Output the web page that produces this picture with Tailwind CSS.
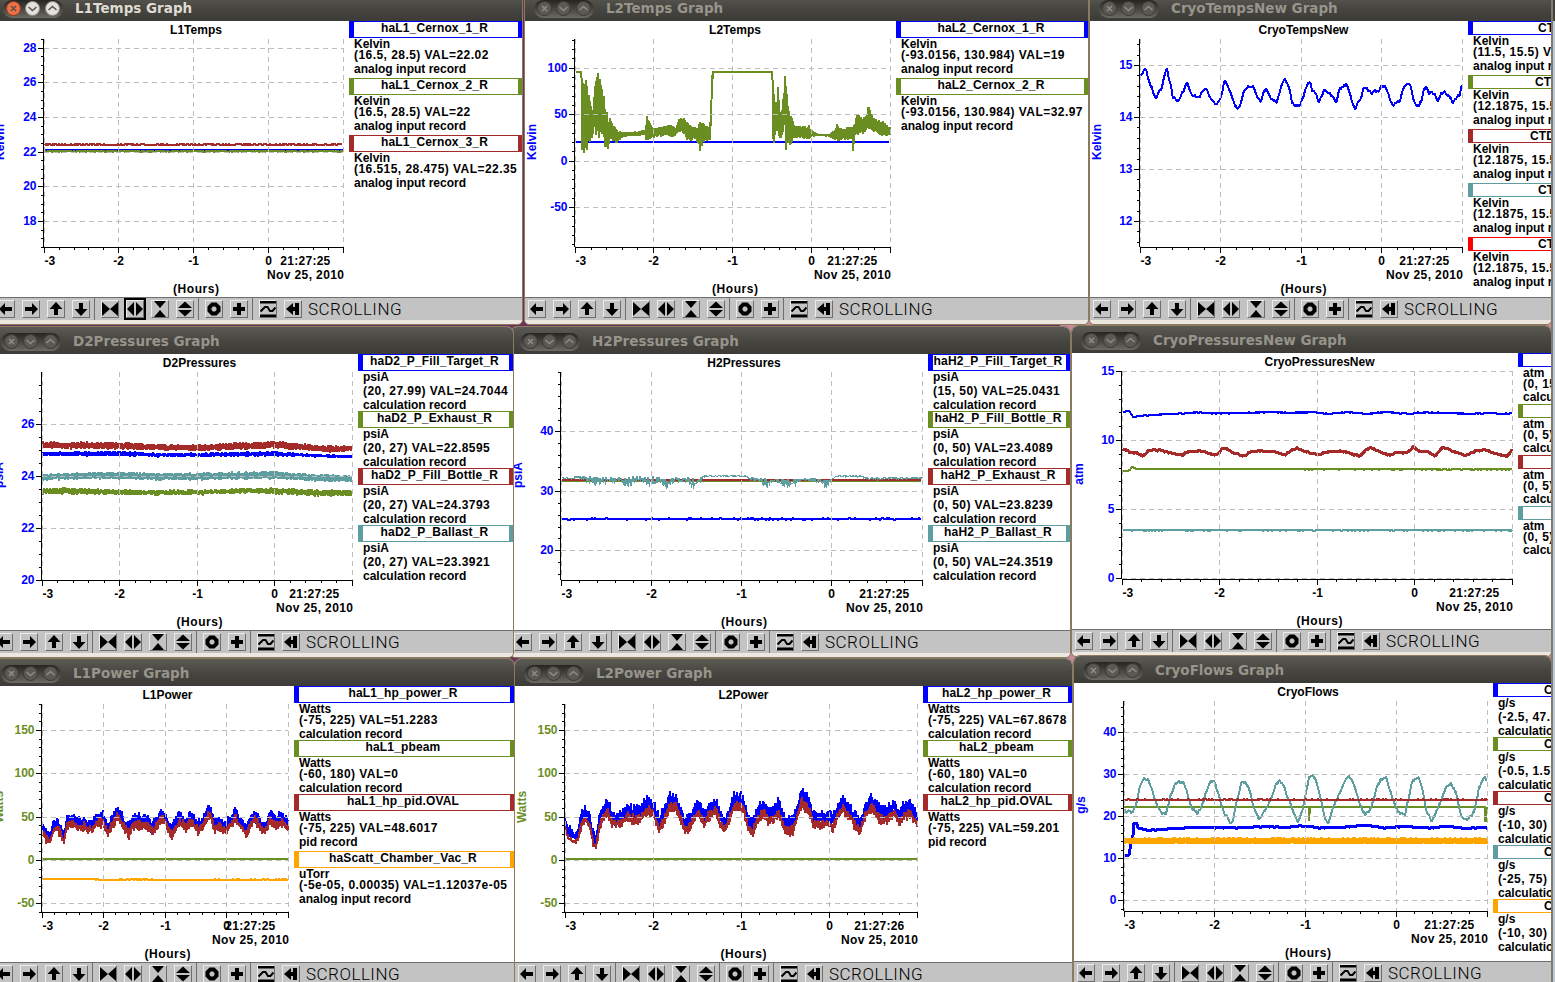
<!DOCTYPE html>
<html lang="en">
  <head>
    <meta charset="UTF-8" />
    <meta name="viewport" content="width=device-width, initial-scale=1.0" />
    <title>Strip charts</title>
    <script src="https://cdn.jsdelivr.net/npm/@tailwindcss/browser@4"></script>
  </head>
  <body class="h-screen w-screen overflow-hidden bg-[#6d3259] font-['Liberation_Sans',sans-serif]">
    <div id="desktop" class="relative h-[982px] w-[1555px] overflow-hidden">
      <div class="absolute left-[1060px] top-0 h-full w-[495px] bg-[#c98a9c]"></div>
    </div>

    <script>
      const BLUE = "#0000ff", GREEN = "#6b8e23", RED = "#a52a2a", TEAL = "#5f9ea0", ORANGE = "#ffa500";
      const BORDER = {
        "#0000ff": "border-[#0000ff]",
        "#6b8e23": "border-[#6b8e23]",
        "#a52a2a": "border-[#a52a2a]",
        "#5f9ea0": "border-[#5f9ea0]",
        "#ffa500": "border-[#ffa500]",
        "#ff0000": "border-[#ff0000]",
      };

      // legend rhythms: item height, name box height, then the three text lines
      const TALL = ["h-[57px]", "h-[17px]", "leading-[12px]", "leading-[11px]", "leading-[16px]"];
      const PSI = ["h-[57px]", "h-[17px]", "leading-[12px]", "leading-[16px]", "leading-[12px]"];
      const WATT = ["h-[54px]", "h-[17px]", "leading-[12px]", "leading-[11px]", "leading-[16px]"];
      const SHORT = ["h-[54px]", "h-[14px]", "leading-[12px]", "leading-[11px]", "leading-[16px]"];
      const ATM = ["h-[51px]", "h-[14px]", "leading-[12px]", "leading-[11px]", "leading-[15px]"];
      const FLOW = ["h-[54px]", "h-[14px]", "leading-[12px]", "leading-[16px]", "leading-[12px]"];

      let seed = 11;
      const rnd = () => (seed = (seed * 16807) % 2147483647) / 2147483647;

      // points are [x, top, bottom]; the trace swings between both edges on every column
      function trace(s) {
        const pts = s.p;
        const n = s.n || 0;
        let d = "";
        let i = 0;
        for (let x = Math.ceil(pts[0][0]); x <= pts[pts.length - 1][0]; x++) {
          while (i < pts.length - 2 && pts[i + 1][0] <= x) i++;
          const a = pts[i], b = pts[i + 1];
          const t = Math.min(1, Math.max(0, (x - a[0]) / (b[0] - a[0])));
          const top = a[1] + (b[1] - a[1]) * t;
          const a2 = a[2] ?? a[1], b2 = b[2] ?? b[1];
          const bot = a2 + (b2 - a2) * t;
          const j = (bot - top) * (s.j ?? 0.15);
          const y1 = top + rnd() * j + (rnd() - 0.5) * n;
          const y2 = bot - rnd() * j + (rnd() - 0.5) * n;
          d += (d ? "L" : "M") + x + " " + Math.round(y1) + "L" + x + " " + Math.round(bot - top < 0.1 ? y1 : y2);
        }
        return `<path d="${d}" fill="none" stroke="${s.c}" stroke-width="${s.w || 2}" stroke-linejoin="bevel" />`;
      }

      const flat = (x0, x1, y, y2) => [[x0, y, y2 ?? y], [x1, y, y2 ?? y]];
      const shift = (pts, a, b) => pts.map((p) => [p[0], p[1] + a, p[2] + b]);

      const l1 = [[42,822,828],[47,828,838],[50,832,837],[54,820,826],[58,818,825],[61,824,834],[64,830,838],[67,816,824],[72,812,820],[77,816,824],[82,818,826],[84,814,824],[88,819,827],[93,818,826],[98,812,820],[103,811,820],[108,822,831],[112,815,823],[117,804,815],[120,810,818],[125,818,826],[129,822,832],[133,814,822],[138,812,824],[143,814,822],[147,813,823],[152,820,830],[157,815,824],[160,808,817],[165,810,818],[168,820,827],[172,823,832],[177,815,823],[180,810,820],[185,817,825],[192,811,820],[198,820,828],[203,815,824],[208,805,812],[211,806,813],[214,818,826],[219,815,824],[226,821,828],[232,813,820],[235,807,816],[240,815,822],[247,823,832],[250,815,822],[255,808,816],[260,817,824],[265,821,828],[270,810,818],[276,815,823],[282,812,820],[288,817,826]];
      const l2 = [[565,812,822],[567,823,833],[570,824,834],[574,830,839],[578,825,836],[582,807,820],[586,806,815],[590,813,822],[593,828,840],[596,833,843],[599,815,830],[603,803,815],[608,796,810],[612,808,820],[617,809,824],[622,808,820],[628,802,817],[634,804,818],[640,803,817],[645,797,812],[650,794,810],[655,802,816],[659,815,828],[664,805,820],[670,790,806],[676,791,805],[680,803,818],[685,814,827],[690,812,828],[694,804,815],[699,796,811],[704,810,822],[709,800,815],[716,796,810],[720,808,822],[725,816,828],[729,805,818],[734,791,806],[740,789,805],[744,797,812],[748,812,826],[752,817,832],[757,806,820],[763,797,812],[768,804,820],[773,804,818],[779,797,812],[783,810,822],[787,815,830],[793,814,829],[797,803,815],[802,786,803],[806,790,806],[810,797,812],[813,809,822],[820,811,823],[828,809,822],[833,812,825],[838,802,815],[843,793,808],[850,802,815],[856,811,826],[860,817,831],[865,802,815],[870,792,808],[875,796,810],[881,805,820],[887,803,818],[893,797,812],[899,807,820],[905,800,814],[910,798,814],[917,809,820]];

      const windows = [
        {
          title: "L1Temps", active: true, x: -6, y: -6, w: 528, h: 276, lx: 349, color: BLUE, unit: "Kelvin", uy: 142, ux: 1, time: "21:27:25",
          xt: [44, 118, 193, 268, 343], range: [16.5, 28.5, 247, 39], major: [18, 20, 22, 24, 26, 28], minor: 0.5, focus: 5,
          fit: TALL, legend: [
            [BLUE, "haL1_Cernox_1_R", "Kelvin", "(16.5, 28.5) VAL=22.02", "analog input record"],
            [GREEN, "haL1_Cernox_2_R", "Kelvin", "(16.5, 28.5) VAL=22", "analog input record"],
            [RED, "haL1_Cernox_3_R", "Kelvin", "(16.515, 28.475) VAL=22.35", "analog input record"],
          ],
          series: [
            { c: BLUE, p: flat(44, 343, 150) },
            { c: GREEN, w: 2, p: flat(44, 343, 151.4), n: 0.5 },
            { c: RED, p: flat(45, 342, 144.6), n: 1 },
          ],
        },
        {
          title: "L2Temps", x: 525, y: -6, w: 563, h: 276, lx: 896, color: BLUE, unit: "Kelvin", uy: 142, time: "21:27:25",
          xt: [575, 653, 732, 811, 890], range: [-93.0156, 130.984, 247, 39], major: [-50, 0, 50, 100], minor: 10,
          fit: TALL, legend: [
            [BLUE, "haL2_Cernox_1_R", "Kelvin", "(-93.0156, 130.984) VAL=19", "analog input record"],
            [GREEN, "haL2_Cernox_2_R", "Kelvin", "(-93.0156, 130.984) VAL=32.97", "analog input record"],
          ],
          series: [
            { c: BLUE, p: flat(575, 889, 142) },
            { c: GREEN, j: 0.2, p: [[576,72,72],[581,72,72],[582,72,154],[585,78,155],[587,77,155],[590,100,145],[593,108,137],[595,76,130],[596,72,140],[598,72,141],[600,74,138],[603,90,138],[604,95,147],[606,108,150],[608,115,150],[611,120,141],[615,126,144],[617,130,143],[622,132,138],[631,132,136],[642,130,136],[645,130,136],[647,115,144],[650,122,141],[653,128,138],[660,126,137],[667,124,136],[673,124,138],[676,127,135],[679,118,132],[684,116,134],[687,121,142],[693,126,140],[696,128,141],[700,122,152],[703,122,143],[707,124,141],[710,128,141],[711,100,128],[712,72,90],[713,72,72],[772,72,72],[773,72,155],[774,90,155],[776,110,130],[778,87,135],[780,112,142],[782,110,140],[785,73,125],[786,73,155],[788,105,148],[790,108,147],[792,115,145],[794,124,138],[798,126,138],[805,126,140],[809,125,141],[813,131,137],[820,134,136],[830,134,137],[834,130,141],[837,123,142],[842,129,140],[849,126,141],[852,128,140],[853,125,152],[855,122,136],[857,111,136],[862,117,135],[867,114,132],[868,103,128],[871,113,130],[876,119,134],[882,120,136],[890,127,137]] },
          ],
        },
        {
          title: "CryoTempsNew", x: 1090, y: -6, w: 461, h: 276, lx: 1468, color: BLUE, unit: "Kelvin", uy: 142, time: "21:27:25",
          xt: [1140, 1220, 1301, 1381, 1462], range: [11.5, 15.5, 247, 39], major: [12, 13, 14, 15], minor: 0.2,
          fit: SHORT, legend: [
            [BLUE, "CT", "Kelvin", "(11.5, 15.5) VAL=14.6", "analog input record", 65],
            [GREEN, "CT", "Kelvin", "(12.1875, 15.5) VAL=14", "analog input record", 62],
            [RED, "CTD", "Kelvin", "(12.1875, 15.5) VAL=14", "analog input record", 57],
            [TEAL, "CT", "Kelvin", "(12.1875, 15.5) VAL=14", "analog input record", 65],
            ["#ff0000", "CT", "Kelvin", "(12.1875, 15.5) VAL=14", "analog input record", 65],
          ],
          series: [
            { c: BLUE, n: 3, p: [[1140,77],[1142,74],[1144,69],[1146,70],[1149,81],[1152,88],[1154,95],[1156,98],[1159,92],[1161,90],[1163,82],[1165,73],[1167,69],[1169,80],[1171,86],[1173,97],[1175,98],[1178,102],[1180,98],[1182,92],[1184,90],[1187,83],[1189,89],[1191,94],[1194,96],[1200,96],[1203,91],[1206,88],[1209,96],[1212,101],[1216,105],[1220,100],[1222,92],[1224,83],[1226,82],[1229,89],[1232,98],[1235,106],[1238,109],[1241,103],[1244,90],[1247,87],[1251,86],[1253,85],[1255,90],[1258,99],[1261,101],[1264,92],[1266,88],[1268,94],[1271,99],[1277,102],[1280,91],[1283,83],[1285,79],[1288,84],[1290,91],[1292,102],[1295,105],[1300,105],[1303,98],[1305,90],[1308,83],[1310,82],[1312,91],[1315,92],[1317,97],[1319,103],[1322,95],[1325,89],[1328,92],[1331,95],[1334,98],[1336,103],[1339,91],[1342,86],[1347,85],[1349,90],[1352,101],[1355,109],[1358,102],[1361,99],[1363,90],[1367,88],[1371,93],[1375,90],[1379,92],[1381,86],[1385,87],[1388,92],[1390,101],[1393,106],[1396,103],[1400,101],[1403,90],[1406,85],[1409,83],[1411,88],[1413,98],[1416,105],[1419,106],[1422,98],[1424,90],[1426,87],[1429,94],[1432,92],[1435,95],[1438,103],[1441,93],[1444,92],[1447,94],[1450,98],[1453,102],[1456,98],[1460,94],[1462,84]] },
          ],
        },
        {
          title: "D2Pressures", x: -8, y: 327, w: 521, h: 276, lx: 358, color: BLUE, unit: "psiA", uy: 475, ux: 0, top: true, time: "21:27:25",
          xt: [42, 119, 197, 274, 352], range: [20, 27.99, 579.500, 372], major: [20, 22, 24, 26], minor: 0.5,
          fit: PSI, legend: [
            [BLUE, "haD2_P_Fill_Target_R", "psiA", "(20, 27.99) VAL=24.7044", "calculation record"],
            [GREEN, "haD2_P_Exhaust_R", "psiA", "(20, 27) VAL=22.8595", "calculation record"],
            [RED, "haD2_P_Fill_Bottle_R", "psiA", "(20, 27) VAL=24.3793", "calculation record"],
            [TEAL, "haD2_P_Ballast_R", "psiA", "(20, 27) VAL=23.3921", "calculation record"],
          ],
          series: [
            { c: BLUE, n: 1.4, p: [[43,452,456],[120,451,456],[160,453,457],[200,453,457],[275,451,456],[310,454,457],[351,455,458]] },
            { c: GREEN, n: 2, p: [[43,488,494],[70,488,494],[140,490,495],[200,490,495],[250,488,493],[275,488,494],[320,490,496],[351,490,496]] },
            { c: RED, n: 2, p: [[43,442,448],[80,442,449],[110,442,449],[150,444,450],[190,445,451],[230,443,450],[275,441,448],[300,444,450],[330,446,452],[351,445,451]] },
            { c: TEAL, n: 2, p: [[43,474,480],[100,472,479],[150,473,480],[190,473,480],[275,471,479],[310,474,481],[351,475,482]] },
          ],
        },
        {
          title: "H2Pressures", x: 511, y: 327, w: 559, h: 276, lx: 928, color: BLUE, unit: "psiA", uy: 475, ux: 519, time: "21:27:25",
          xt: [561, 651, 741, 831, 922], range: [15, 50, 580, 372], major: [20, 30, 40], minor: 2,
          fit: PSI, legend: [
            [BLUE, "haH2_P_Fill_Target_R", "psiA", "(15, 50) VAL=25.0431", "calculation record"],
            [GREEN, "haH2_P_Fill_Bottle_R", "psiA", "(0, 50) VAL=23.4089", "calculation record"],
            [RED, "haH2_P_Exhaust_R", "psiA", "(0, 50) VAL=23.8239", "calculation record"],
            [TEAL, "haH2_P_Ballast_R", "psiA", "(0, 50) VAL=24.3519", "calculation record"],
          ],
          series: [
            { c: BLUE, n: 1.2, p: flat(562, 921, 519) },
            { c: GREEN, n: 0.4, p: flat(562, 921, 481) },
            { c: RED, n: 0.4, w: 2, p: flat(562, 921, 480) },
            { c: TEAL, w: 1, j: 0.6, n: 1, p: [[562,476,480],[585,476,480],[586,476,486],[600,476,486],[612,475,485],[619,477,482],[626,477,488],[640,475,484],[653,476,488],[659,476,484],[664,478,491],[668,478,489],[675,477,482],[680,477,484],[687,477,482],[692,478,490],[697,478,486],[705,475,477],[745,475,477],[750,477,481],[757,478,482],[763,478,486],[768,478,489],[775,478,482],[786,478,490],[795,478,487],[800,479,481],[810,478,481],[822,479,484],[826,479,491],[830,479,481],[838,475,477],[860,475,478],[870,477,481],[890,477,480],[922,477,479]] },
          ],
        },
        {
          title: "CryoPressuresNew", x: 1072, y: 326, w: 479, h: 276, lx: 1518, color: BLUE, unit: "atm", uy: 474, time: "21:27:25",
          xt: [1122, 1219, 1317, 1414, 1512], range: [0, 15, 578, 371], major: [0, 5, 10, 15], minor: 1,
          fit: ATM, legend: [
            [BLUE, "", "atm", "(0, 15) VAL=12", "calculation record", 40],
            [GREEN, "", "atm", "(0, 5) VAL=2.6", "calculation record", 40],
            [RED, "", "atm", "(0, 5) VAL=3.1", "calculation record", 40],
            [TEAL, "", "atm", "(0, 5) VAL=1.2", "calculation record", 40],
          ],
          series: [
            { c: BLUE, n: 0.8, p: [[1123,412],[1129,411],[1133,417],[1140,416],[1150,415],[1170,414],[1200,412.5],[1217,413.5],[1245,413],[1272,412],[1290,413],[1312,412],[1330,414],[1348,412],[1366,414],[1385,412],[1410,414],[1420,412.5],[1450,413],[1470,414],[1490,413],[1505,414],[1512,413]] },
            { c: GREEN, n: 0.8, p: [[1123,471],[1130,470.5],[1132,467],[1137,469],[1512,469.3]] },
            { c: RED, w: 3, n: 1.6, p: [[1123,449],[1130,452],[1138,453],[1142,456],[1150,450],[1160,450],[1170,453],[1182,455],[1190,451],[1202,451],[1210,454],[1217,455],[1222,449],[1225,448],[1235,453],[1244,456],[1250,452],[1260,451],[1275,452],[1285,455],[1292,450],[1297,448],[1307,452],[1318,455],[1330,451],[1340,451],[1350,453],[1360,456],[1366,450],[1371,448],[1380,452],[1390,455],[1398,452],[1405,453],[1410,450],[1413,447],[1420,452],[1427,451],[1435,456],[1440,450],[1444,447],[1455,452],[1467,455],[1475,451],[1485,450],[1495,453],[1505,456],[1508,456],[1512,449]] },
            { c: TEAL, n: 0.6, p: flat(1123, 1512, 530.3) },
          ],
        },
        {
          title: "L1Power", x: -8, y: 659, w: 522, h: 276, lx: 294, color: GREEN, unit: "Watts", uy: 807, ux: 0, time: "21:27:25",
          xt: [42, 103, 165, 226, 288], range: [-60, 180, 912, 704], major: [-50, 0, 50, 100, 150], minor: 10,
          fit: WATT, legend: [
            [BLUE, "haL1_hp_power_R", "Watts", "(-75, 225) VAL=51.2283", "calculation record"],
            [GREEN, "haL1_pbeam", "Watts", "(-60, 180) VAL=0", "calculation record"],
            [RED, "haL1_hp_pid.OVAL", "Watts", "(-75, 225) VAL=48.6017", "pid record", 0, "h-[57px]"],
            [ORANGE, "haScatt_Chamber_Vac_R", "uTorr", "(-5e-05, 0.00035) VAL=1.12037e-05", "analog input record"],
          ],
          series: [
            { c: BLUE, j: 0.3, n: 5, p: shift(l1, 0, 4) },
            { c: RED, w: 2, j: 0.3, n: 4, p: shift(l1, 7, 7) },
            { c: GREEN, p: flat(43, 288, 859) },
            { c: ORANGE, n: 0.8, p: [[43,879],[90,879],[110,880],[130,879.3],[160,880],[288,879.6]] },
          ],
        },
        {
          title: "L2Power", x: 515, y: 659, w: 557, h: 276, lx: 923, color: GREEN, unit: "Watts", uy: 807, time: "21:27:26",
          xt: [565, 653, 741, 829, 917], range: [-60, 180, 912, 704], major: [-50, 0, 50, 100, 150], minor: 10,
          fit: WATT, legend: [
            [BLUE, "haL2_hp_power_R", "Watts", "(-75, 225) VAL=67.8678", "calculation record"],
            [GREEN, "haL2_pbeam", "Watts", "(-60, 180) VAL=0", "calculation record"],
            [RED, "haL2_hp_pid.OVAL", "Watts", "(-75, 225) VAL=59.201", "pid record"],
          ],
          series: [
            { c: BLUE, j: 0.3, n: 5, p: shift(l2, 1, 2) },
            { c: RED, w: 2, j: 0.3, n: 5, p: shift(l2, 11, 6) },
            { c: GREEN, p: flat(566, 917, 859) },
          ],
        },
        {
          title: "CryoFlows", x: 1074, y: 656, w: 477, h: 278, lx: 1493, color: BLUE, unit: "g/s", uy: 805, time: "21:27:25",
          xt: [1124, 1214, 1305, 1396, 1487], range: [-2.5, 47.5, 910.600, 701], major: [0, 10, 20, 30, 40], minor: 2,
          fit: FLOW, legend: [
            [BLUE, "C", "g/s", "(-2.5, 47.5) VAL=17", "calculation record", 46],
            [GREEN, "C", "g/s", "(-0.5, 1.5) VAL=0.5", "calculation record", 46],
            [RED, "C", "g/s", "(-10, 30) VAL=11", "calculation record", 46],
            [TEAL, "C", "g/s", "(-25, 75) VAL=30", "calculation record", 46],
            [ORANGE, "C", "g/s", "(-10, 30) VAL=3", "calculation record", 46],
          ],
          series: [
            { c: GREEN, j: 0, p: [[1124,807],[1308,807],[1309,807,821],[1310,807],[1484,807],[1485,807,822],[1486,807,822],[1487,807]] },
            { c: TEAL, n: 3, p: [[1124,811],[1132,812],[1136,806],[1140,786],[1144,779],[1148,779],[1152,790],[1157,806],[1162,814],[1166,813],[1170,798],[1175,784],[1180,782],[1184,782],[1188,796],[1192,808],[1197,814],[1201,808],[1206,793],[1210,783],[1214,781],[1218,793],[1224,812],[1230,822],[1233,820],[1237,800],[1241,784],[1245,782],[1249,788],[1253,805],[1259,820],[1262,816],[1267,806],[1272,797],[1276,784],[1279,781],[1284,787],[1288,799],[1294,813],[1298,822],[1302,812],[1306,792],[1309,778],[1313,775],[1317,783],[1321,800],[1325,820],[1328,823],[1333,808],[1338,797],[1344,783],[1349,777],[1354,784],[1357,795],[1361,808],[1365,815],[1371,808],[1376,790],[1381,779],[1386,777],[1390,790],[1394,802],[1398,812],[1405,815],[1408,800],[1412,782],[1416,778],[1419,778],[1423,792],[1427,812],[1432,821],[1438,808],[1443,795],[1447,785],[1451,783],[1456,793],[1460,812],[1464,820],[1471,817],[1475,808],[1479,788],[1483,779],[1485,777],[1487,780]] },
            { c: RED, n: 0.8, p: flat(1124, 1487, 799.8) },
            { c: BLUE, n: 1, w: 3, p: [[1125,855],[1129,855],[1131,842],[1133,835],[1134,823],[1137,824],[1138,828],[1150,830],[1165,829],[1200,827],[1240,827.5],[1272,826],[1285,827.5],[1300,825.5],[1320,827.5],[1345,827],[1366,825],[1385,828],[1405,826],[1430,828],[1445,826],[1465,828],[1487,827.5]] },
            { c: ORANGE, n: 1, j: 0, p: flat(1125, 1487, 837.8, 843.8) },
          ],
        },
      ];

      // toolbar glyphs on a 16px grid
      const glyphs = [
        '<path d="M1 8 7 2V6h7v4H7v4z"/>',
        '<path d="M15 8 9 2V6H2v4h7v4z"/>',
        '<path d="M8 1 1.500 8H6v6h4V8h4.500z"/>',
        '<path d="M8 15 1.500 8H6V2h4v6h4.500z"/>',
        "|",
        '<path d="M0 1 8 8 0 15zM16 1 8 8 16 15z"/>',
        '<path d="M7 1V15L0 8zM9 1V15L16 8z"/>',
        '<path d="M2 0h12L8 7zM2 16h12L8 9z"/>',
        '<path d="M1 7h14L8 .5zM1 9h14L8 15.500z"/>',
        "|",
        '<path fill-rule="evenodd" d="M5.500 1.500h5l4 4v5l-4 4h-5l-4-4v-5zM7 5.500 5.500 7v2L7 10.500h2L10.500 9V7L9 5.500z"/>',
        '<path d="M6 2h4v4h4v4h-4v4H6v-4H2V6h4z"/>',
        "|",
        '<path d="M0 0h16v2.500H0zM0 13.500h16V16H0z"/><path d="M.5 10.500 5 6h2.500L10 10h2.500L15.500 6.500" fill="none" stroke="#000" stroke-width="2"/>',
        '<path d="M1 8 8 2v4h2V2h4v12h-4v-4H8v4z"/>',
        "|",
      ];

      function toolbar(focus) {
        let n = 0;
        const items = glyphs.map((g) => {
          if (g === "|") return '<div class="flex h-[22px] w-1 shrink-0"><div class="w-px bg-[#6e6e6e]"></div></div>';
          const on = n++ === focus;
          return `<div class="h-[18px] w-[18px] shrink-0 ml-[3px] mr-1 border border-t-[#ececec] border-l-[#ececec] border-r-[#6e6e6e] border-b-[#6e6e6e] ${on ? "outline-2 outline-black" : ""}">
            <svg class="block h-4 w-4" viewBox="0 0 16 16">${g}</svg></div>`;
        });
        items.pop();
        return `<div class="flex h-[23px] items-center border-t border-[#6e6e6e] bg-[#c3c3c3]">${items.join("")}
          <span class="ml-0.5 whitespace-nowrap text-[17px] leading-[20px] font-light tracking-[0.5px] font-['Roboto']">SCROLLING</span></div>`;
      }

      function plot(w) {
        const T = w.y + 27;
        const x0 = w.xt[0], x1 = w.xt[4];
        const [lo, hi, yb, yt] = w.range;
        const Y = (v) => Math.round(yb - ((v - lo) * (yb - yt)) / (hi - lo));
        const base = T + w.h - 50;
        const mid = (x0 + x1) / 2 + 2.5;
        let ticks = "", grid = "", labels = "";
        for (let k = Math.ceil(lo / w.minor - 1e-6); k * w.minor <= hi + 1e-6; k++) ticks += `M${x0 - 3} ${Y(k * w.minor) + 0.5}h3`;
        w.major.forEach((v) => {
          ticks += `M${x0 - 6} ${Y(v) + 0.5}h6`;
          grid += `M${x0} ${Y(v) + 0.5}H${x1}`;
          labels += `<text x="${x0 - 7.500}" y="${Y(v) + 4}" text-anchor="end" fill="${w.color}">${v}</text>`;
        });
        w.xt.forEach((x, i) => {
          ticks += `M${x + 0.5} ${base}v6`;
          grid += `M${x + 0.5} ${T + 18}V${base}`;
          if (i < 4) {
            for (let m = 1; m < 5; m++) ticks += `M${Math.round(x + ((w.xt[i + 1] - x) * m) / 5) + 0.5} ${base}v3`;
            labels += `<text x="${x + 0.5}" y="${base + 18}" text-anchor="${i ? "middle" : "start"}">${i - 3}</text>`;
          }
        });
        const ux = w.ux ?? w.x + 7.500;
        return `<svg class="block shrink-0 text-[12px] font-bold" width="${w.lx - w.x}" height="${w.h}" viewBox="${w.x} ${T} ${w.lx - w.x} ${w.h}">
          <text x="${mid}" y="${T + 13}" text-anchor="middle">${w.title}</text>
          <g shape-rendering="crispEdges">
            ${w.series.map(trace).join("")}
            <path d="${grid}" stroke="#bebebe" stroke-dasharray="5 4" />
            <path d="${ticks}M${x0 - 0.5} ${T + 18}V${base}M${x0} ${base + 0.5}H${x1 + 1}" stroke="#000" />
          </g>
          ${labels}
          <text x="${x1 - 37.700}" y="${base + 18}" text-anchor="middle" textLength="50">${w.time}</text>
          <text x="${x1 + 1}" y="${base + 32}" text-anchor="end" textLength="77">Nov 25, 2010</text>
          <text x="${mid}" y="${base + 46}" text-anchor="middle" textLength="46">(Hours)</text>
          <text transform="translate(${ux + 3} ${w.uy}) rotate(-90)" text-anchor="middle" fill="${w.color}">${w.unit}</text>
        </svg>`;
      }

      function legend(w) {
        const f = w.fit;
        return w.legend.map(([c, name, unit, val, rec, pad, tall]) => `
          <div class="${tall || f[0]} overflow-hidden">
            <div class="${f[1]} ${BORDER[c]} border-y border-l-[5px] ${pad ? "" : "border-r-4 text-center -indent-[3px]"} leading-[13px] tracking-[0.15px]">
              <span style="padding-left:${pad || 0}px">${name}</span>
            </div>
            <div class="pl-[5px] ${f[2]}">${unit}</div>
            <div class="pl-[5px] tracking-[0.45px] ${f[3]}">${val}</div>
            <div class="pl-[5px] ${f[4]}">${rec}</div>
          </div>`).join("");
      }

      const chevrons = ["M-2.500-2.500 2.500 2.500M2.500-2.500-2.500 2.500", "M-4-1.500 0 2 4-1.500", "M-4 1.500 0-2 4 1.500"];

      function controls(active) {
        return chevrons.map((d, i) => {
          const face = !active ? "bg-[#5a5953] border-[#3a3934]" : i ? "bg-[#e4e1dc] border-[#8d8a83]" : "bg-[#ee7045] border-[#8a3c20]";
          return `<div class="h-[15px] w-[15px] rounded-full border ${face}">
            <svg class="block h-[13px] w-[13px]" viewBox="-6.500 -6.500 13 13"><path d="${d}" fill="none" stroke="${active ? "#5c5047" : "#8e8c86"}" stroke-width="1.500" /></svg></div>`;
        }).join("");
      }

      const desktop = document.getElementById("desktop");
      desktop.innerHTML += windows.map((w) => `
        <div class="absolute flex flex-col overflow-hidden rounded-t-md rounded-b-sm bg-white outline-1 outline-[#8a7a60] ${w.top ? "z-10" : ""}" style="left:${w.x}px;top:${w.y}px;width:${w.w}px;height:${w.h + 54}px">
          <div class="flex h-[27px] shrink-0 items-center bg-linear-to-b from-[#5b5a53] via-[#474641] to-[#3c3b37] pt-[2px] pl-[9px]">
            <div class="flex h-[18px] w-[60px] items-center justify-around rounded-full bg-linear-to-b from-[#262522] to-[#6b6a64] px-px">${controls(w.active)}</div>
            <span class="ml-[12px] whitespace-nowrap text-[13.500px] leading-none font-bold font-['DejaVu_Sans'] ${w.active ? "text-[#dfdbd2]" : "text-[#97948b]"}">${w.title} Graph</span>
          </div>
          <div class="flex shrink-0 overflow-hidden" style="height:${w.h}px">
            ${plot(w)}
            <div class="grow overflow-hidden whitespace-nowrap text-[12px] font-bold">${legend(w)}</div>
          </div>
          ${toolbar(w.focus)}
          <div class="grow bg-[#ece8e0]"></div>
        </div>`).join("") + `
        <div class="absolute left-[1551px] top-0 h-full w-1 border-l-2 border-[#85796a] bg-[#b9cbd6]">
          <div class="h-[21px] bg-[#42413c]"></div>
        </div>`;
    </script>
  </body>
</html>
